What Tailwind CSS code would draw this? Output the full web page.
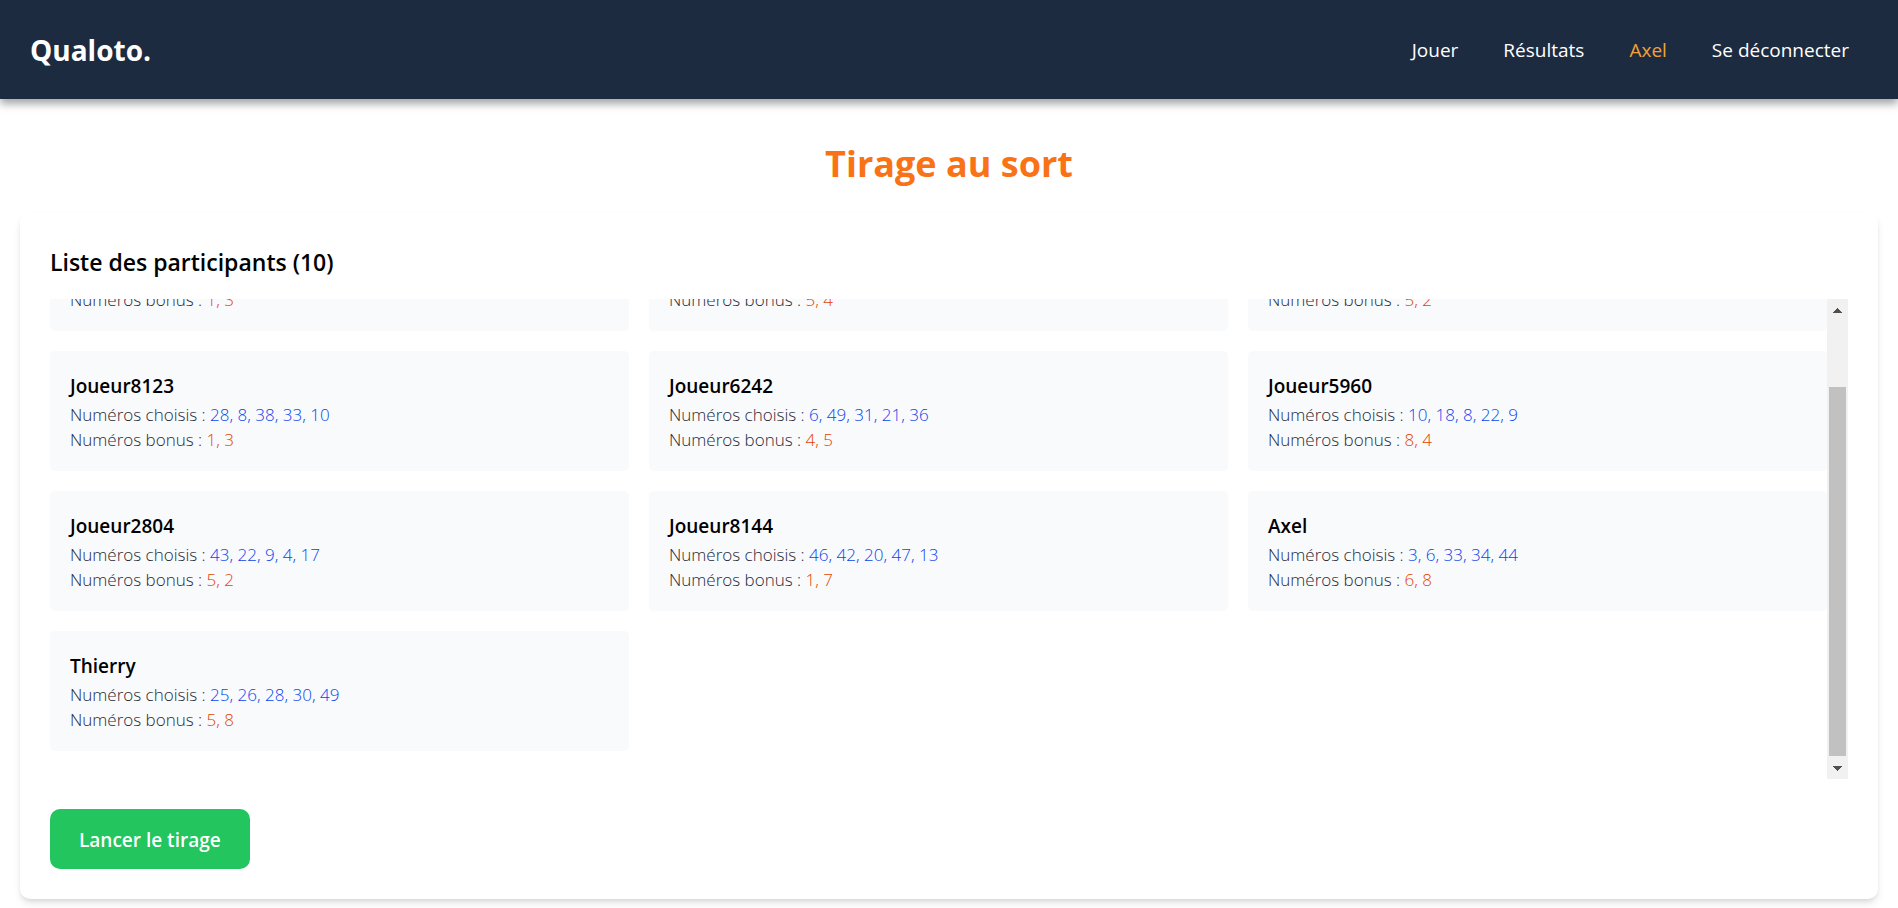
<!DOCTYPE html>
<html lang="fr">
<head>
<meta charset="utf-8">
<meta name="viewport" content="width=device-width, initial-scale=1">
<title>Qualoto</title>
<script src="https://cdn.jsdelivr.net/npm/@tailwindcss/browser@4"></script>
</head>
<body class="min-h-screen bg-white font-['Segoe_UI','Open_Sans',sans-serif] text-black">
<header class="flex h-[99px] items-center justify-between bg-[#1d2b41] pt-px pr-[49px] pl-[30px] text-white shadow-[0_5px_8px_rgba(0,0,0,0.35)]">
  <a href="#" class="text-[28px] font-bold">Qualoto.</a>
  <nav class="flex items-center gap-[45px] text-[19px]">
    <a href="#">Jouer</a>
    <a href="#">Résultats</a>
    <a href="#" class="text-[#f0a236]">Axel</a>
    <a href="#">Se déconnecter</a>
  </nav>
</header>
<main class="px-5 pt-[41px] pb-[9px]">
  <h1 class="text-center text-[36px] leading-[48px] font-bold text-[#f97316]">Tirage au sort</h1>
  <section class="mt-[25px] rounded-[10px] bg-white p-[30px] shadow-[0_5px_8px_-1px_rgba(0,0,0,0.1),0_3px_5px_-2px_rgba(0,0,0,0.1)]">
    <h2 class="mb-[18px] text-[23px] leading-[38px] font-semibold">Liste des participants (10)</h2>
    <div class="flex h-[480px]">
      <!-- Reversed column: the list opens scrolled to its end -->
      <div id="liste" class="flex min-w-0 flex-1 flex-col-reverse overflow-y-auto [scrollbar-width:none]">
        <div class="shrink-0 pb-7">
          <ul id="grille" class="grid grid-cols-3 gap-5"></ul>
        </div>
      </div>
      <div role="scrollbar" aria-label="Défilement de la liste" aria-controls="liste" aria-orientation="vertical" aria-valuenow="100" class="flex w-[21px] flex-col bg-[#f1f1f1]">
        <button id="haut" type="button" aria-label="Défiler vers le haut" class="flex h-[22px] shrink-0 items-center justify-center">
          <svg width="9" height="5" viewBox="0 0 9 5" fill="#505050" shape-rendering="crispEdges"><path d="M4 0h1v1h1v1h1v1h1v1h1v1H0V4h1V3h1V2h1V1h1z"/></svg>
        </button>
        <div id="piste" class="min-h-0 flex-1 px-[2px]"><div id="curseur" class="mt-[66px] h-[369px] bg-[#c1c1c1]"></div></div>
        <button id="bas" type="button" aria-label="Défiler vers le bas" class="flex h-[22px] shrink-0 items-center justify-center">
          <svg width="9" height="5" viewBox="0 0 9 5" fill="#505050" shape-rendering="crispEdges"><path d="M0 0h9v1H8v1H7v1H6v1H5v1H4V4H3V3H2V2H1V1H0z"/></svg>
        </button>
      </div>
    </div>
    <button type="button" class="mt-[30px] h-[60px] rounded-[10px] bg-[#22c55e] px-[29px] pt-[2px] text-[19px] font-semibold text-white">Lancer le tirage</button>
  </section>
</main>
<template id="carte">
  <li class="h-[120px] rounded-[5px] bg-[#f9fafc] p-5">
    <h3 class="text-[19px] leading-[31px] font-semibold"></h3>
    <p class="text-[17px] leading-[25px] font-light text-[#1f2937]">Numéros choisis : <span class="text-[#0a45ec]"></span></p>
    <p class="text-[17px] leading-[25px] font-light text-[#1f2937]">Numéros bonus : <span class="text-[#e24400]"></span></p>
  </li>
</template>
<script>
const participants = [
  ["Joueur1275", "4, 12, 27, 31, 45", "1, 3"],
  ["Joueur3391", "7, 15, 22, 36, 48", "5, 4"],
  ["Joueur7406", "2, 11, 19, 35, 40", "5, 2"],
  ["Joueur8123", "28, 8, 38, 33, 10", "1, 3"],
  ["Joueur6242", "6, 49, 31, 21, 36", "4, 5"],
  ["Joueur5960", "10, 18, 8, 22, 9", "8, 4"],
  ["Joueur2804", "43, 22, 9, 4, 17", "5, 2"],
  ["Joueur8144", "46, 42, 20, 47, 13", "1, 7"],
  ["Axel", "3, 6, 33, 34, 44", "6, 8"],
  ["Thierry", "25, 26, 28, 30, 49", "5, 8"]
];
const $ = id => document.getElementById(id);
for (const [nom, choisis, bonus] of participants) {
  const c = $("carte").content.cloneNode(true);
  c.querySelector("h3").textContent = nom;
  const s = c.querySelectorAll("span");
  s[0].textContent = choisis;
  s[1].textContent = bonus;
  $("grille").append(c);
}
const liste = $("liste");
liste.addEventListener("scroll", () => {
  const haut = liste.scrollHeight - liste.clientHeight + liste.scrollTop;
  $("curseur").style.marginTop = Math.floor($("piste").clientHeight * haut / liste.scrollHeight) + "px";
});
$("haut").onclick = () => liste.scrollBy(0, -40);
$("bas").onclick = () => liste.scrollBy(0, 40);
</script>
</body>
</html>
